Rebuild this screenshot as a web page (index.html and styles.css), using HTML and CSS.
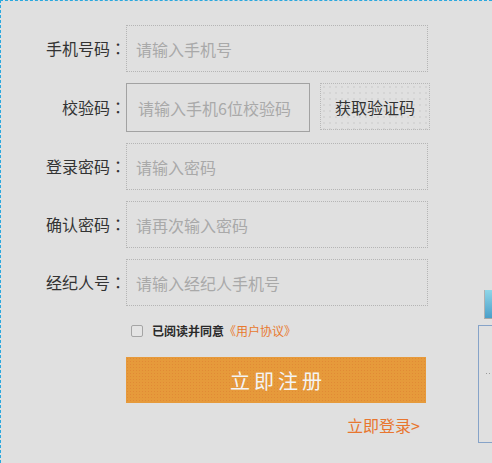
FILE: index.html
```html
<!DOCTYPE html>
<html lang="zh-CN">
<head>
<meta charset="utf-8">
<title>注册</title>
<link rel="stylesheet" href="styles.css">
</head>
<body>
<div class="page">
  <form class="reg">
    <div class="row">
      <label class="lbl">手机号码<span class="colon" lang="ja">：</span></label>
      <input class="inp" type="text" placeholder="请输入手机号">
    </div>
    <div class="row row-code">
      <label class="lbl">校验码<span class="colon" lang="ja">：</span></label>
      <input class="inp inp-code" type="text" placeholder="请输入手机6位校验码">
      <button class="btn-code" type="button">获取验证码</button>
    </div>
    <div class="row">
      <label class="lbl">登录密码<span class="colon" lang="ja">：</span></label>
      <input class="inp" type="password" placeholder="请输入密码">
    </div>
    <div class="row">
      <label class="lbl">确认密码<span class="colon" lang="ja">：</span></label>
      <input class="inp" type="password" placeholder="请再次输入密码">
    </div>
    <div class="row">
      <label class="lbl">经纪人号<span class="colon" lang="ja">：</span></label>
      <input class="inp" type="text" placeholder="请输入经纪人手机号">
    </div>
  </form>
  <div class="agree">
    <input class="chk" type="checkbox">
    <span class="agree-text">已阅读并同意</span><a class="agree-link">《用户协议》</a>
  </div>
  <button class="btn-reg" type="button">立即注册</button>
  <div class="login"><a class="login-link">立即登录&gt;</a></div>
  <div class="side-tab"></div>
  <div class="side-panel"></div>
</div>
</body>
</html>
```
FILE: styles.css
```css
html, body {
  margin: 0;
  background: #e0e0e0;
}
.page {
  position: relative;
  width: 491px;
  height: 462px;
  overflow: hidden;
  border-top: 1px dashed #2aa8de;
  border-left: 1px dashed #2aa8de;
  background: #e0e0e0;
  font-family: "Noto Sans CJK SC", "Noto Sans", sans-serif;
}
.reg {
  margin: 0;
  padding-top: 24px;
  display: flex;
  flex-direction: column;
  gap: 11px;
}
.row {
  display: flex;
  align-items: flex-start;
  height: 47px;
}
.row-code {
  height: 49px;
}
.lbl {
  width: 125px;
  text-align: right;
  font-size: 16px;
  line-height: 47px;
  color: #333;
}
.colon {
  font-family: "Noto Sans CJK JP", "Noto Sans CJK SC", sans-serif;
}
.row-code .lbl {
  line-height: 49px;
}
.inp {
  box-sizing: border-box;
  width: 302px;
  height: 47px;
  margin: 0;
  padding: 0 0 0 9px;
  border: 1px dotted #b5b5b5;
  background: transparent;
  font-family: "Noto Sans CJK SC", sans-serif;
  font-size: 16px;
  color: #333;
  outline: none;
}
.inp::placeholder {
  color: #a9a9a9;
}
.inp-code {
  width: 184px;
  height: 49px;
  padding-left: 11px;
  border: 1px solid #a2a2a2;
}
.btn-code {
  box-sizing: border-box;
  width: 110px;
  height: 47px;
  margin: 0 0 0 10px;
  padding: 0;
  border: 1px dotted #b8b8b8;
  background-color: #e0e0e0;
  background-image: radial-gradient(circle, #cfcfcf 0.6px, transparent 0.9px);
  background-size: 6px 6px;
  font-family: "Noto Sans CJK SC", sans-serif;
  font-size: 16px;
  color: #333;
}
.agree {
  display: flex;
  align-items: center;
  height: 14px;
  margin: 18px 0 0 130px;
  font-size: 12px;
  line-height: 14px;
}
.chk {
  appearance: none;
  -webkit-appearance: none;
  box-sizing: border-box;
  width: 12px;
  height: 12px;
  margin: 0 9px 0 0;
  border: 1px solid #a5a5a5;
  border-radius: 2px;
  background: #e4e4e4;
}
.agree-text {
  color: #2a2a2a;
  font-weight: 600;
}
.agree-link {
  color: #e8792e;
}
.btn-reg {
  display: block;
  box-sizing: border-box;
  width: 300px;
  height: 46px;
  margin: 19px 0 0 125px;
  padding: 0 0 0 4px;
  border: none;
  background-color: #e69a3b;
  background-image: radial-gradient(circle, #e18a35 0.6px, transparent 0.9px);
  background-size: 3px 3px;
  color: #f4f4f4;
  font-family: "Noto Sans CJK SC", sans-serif;
  font-size: 20px;
  letter-spacing: 4px;
}
.login {
  width: 300px;
  margin: 12px 0 0 125px;
  padding-right: 6px;
  box-sizing: border-box;
  text-align: right;
  font-size: 16px;
  line-height: 20px;
}
.login-link {
  color: #e8762f;
}
.side-tab {
  position: absolute;
  left: 483px;
  top: 289px;
  width: 10px;
  height: 28px;
  border-left: 1px solid #b0b0b0;
  border-bottom: 1px solid #a8a8a8;
  background: linear-gradient(#8fd6e8, #4a9fc9);
}
.side-panel {
  position: absolute;
  left: 477px;
  top: 324px;
  width: 20px;
  height: 116px;
  border: 1px solid #86a3c8;
}
.side-panel::after {
  content: "";
  position: absolute;
  left: 7px;
  top: 47px;
  width: 1px;
  height: 1px;
  background: #9a9a9a;
  box-shadow: 3px 0 0 #9a9a9a;
}
```
